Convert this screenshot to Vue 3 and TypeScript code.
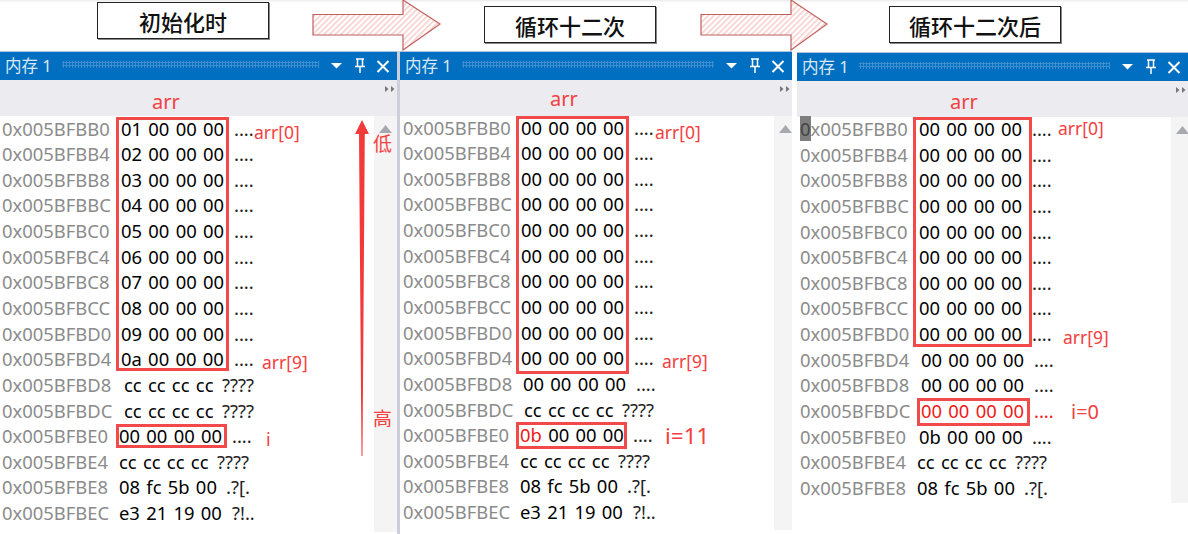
<script setup lang="ts">
interface Row { a: string; h: string; t: string; i: number; hot?: string; red?: boolean }
interface Note { text: string; x: number; y: number; size: number }
interface Box { x: number; y: number; w: number; h: number }
interface Panel { w: number; top: number; addrX: number; lift: number; rows: Row[]; notes: Note[]; boxes: Box[]; arrX: number; arrY: number; cursor?: boolean; scrollCut: number }

const addrs = ['BB0','BB4','BB8','BBC','BC0','BC4','BC8','BCC','BD0','BD4']
const mk = (vals: string[], x: number): Row[] => addrs.map((s, k) => ({ a: '0x005BF' + s, h: vals[k], t: '....', i: x }))
const first = ['01','02','03','04','05','06','07','08','09','0a'].map(v => v + ' 00 00 00')
const zero = Array(10).fill('00 00 00 00') as string[]

const panels: Panel[] = [
  {
    w: 400, top: 0, addrX: 2, lift: 0.5, arrX: 152, arrY: 90, scrollCut: 2,
    rows: [...mk(first, 121),
      { a: '0x005BFBD8', h: 'cc cc cc cc', t: '????', i: 124 },
      { a: '0x005BFBDC', h: 'cc cc cc cc', t: '????', i: 124 },
      { a: '0x005BFBE0', h: '00 00 00 00', t: '....', i: 119 },
      { a: '0x005BFBE4', h: 'cc cc cc cc', t: '????', i: 119 },
      { a: '0x005BFBE8', h: '08 fc 5b 00', t: '.?[.', i: 119 },
      { a: '0x005BFBEC', h: 'e3 21 19 00', t: '?!..', i: 119 }],
    notes: [
      { text: 'arr[0]', x: 254, y: 122, size: 17.5 },
      { text: 'arr[9]', x: 262, y: 352, size: 17.5 },
      { text: 'i', x: 266, y: 429, size: 18 },
      { text: '低', x: 373, y: 133, size: 19 },
      { text: '高', x: 373, y: 408, size: 19 }],
    boxes: [{ x: 116, y: 66, w: 113, h: 254 }, { x: 116, y: 373, w: 111, h: 24 }]
  },
  {
    w: 392, top: 0, addrX: 3, lift: 1.5, arrX: 150, arrY: 87, scrollCut: 4,
    rows: [...mk(zero, 121),
      { a: '0x005BFBD8', h: '00 00 00 00', t: '....', i: 123 },
      { a: '0x005BFBDC', h: 'cc cc cc cc', t: '????', i: 124 },
      { a: '0x005BFBE0', h: '00 00 00 00', t: '....', i: 120, hot: '0b' },
      { a: '0x005BFBE4', h: 'cc cc cc cc', t: '????', i: 120 },
      { a: '0x005BFBE8', h: '08 fc 5b 00', t: '.?[.', i: 120 },
      { a: '0x005BFBEC', h: 'e3 21 19 00', t: '?!..', i: 120 }],
    notes: [
      { text: 'arr[0]', x: 255, y: 122, size: 17.5 },
      { text: 'arr[9]', x: 262, y: 351, size: 17.5 },
      { text: 'i=11', x: 265, y: 422, size: 22.5 }],
    boxes: [{ x: 116, y: 65, w: 113, h: 258 }, { x: 116, y: 371, w: 111, h: 27 }]
  },
  {
    w: 391, top: 1, addrX: 3, lift: 1, arrX: 153, arrY: 90, scrollCut: 31, cursor: true,
    rows: [...mk(zero, 122).slice(0, 9),
      { a: '0x005BFBD4', h: '00 00 00 00', t: '....', i: 124 },
      { a: '0x005BFBD8', h: '00 00 00 00', t: '....', i: 124 },
      { a: '0x005BFBDC', h: '00 00 00 00', t: '....', i: 124, red: true },
      { a: '0x005BFBE0', h: '0b 00 00 00', t: '....', i: 122 },
      { a: '0x005BFBE4', h: 'cc cc cc cc', t: '????', i: 120 },
      { a: '0x005BFBE8', h: '08 fc 5b 00', t: '.?[.', i: 120 }],
    notes: [
      { text: 'arr[0]', x: 261, y: 118, size: 17.5 },
      { text: 'arr[9]', x: 266, y: 327, size: 17.5 },
      { text: 'i=0', x: 274, y: 400, size: 20 }],
    boxes: [{ x: 116, y: 65, w: 119, h: 230 }, { x: 120, y: 346, w: 113, h: 28 }]
  }
]

const textLeft = (r: Row): number => {
  if (r.h.startsWith('cc')) return r.i + 98
  if (r.t === '.?[.') return r.i + 107
  return r.i + 113
}
const isCursor = (p: Panel, r: Row): boolean => !!p.cursor && r.a.endsWith('BB0')
</script>

<template>
  <div class="page">
    <header class="banner">
      <div class="label first">初始化时</div>
      <svg class="arrow one" width="130" height="51" viewBox="0 0 130 51">
        <defs>
          <pattern id="hatch" width="4" height="4" patternUnits="userSpaceOnUse" patternTransform="rotate(45)">
            <rect width="4" height="4" fill="#fff" />
            <rect width="1.6" height="4" fill="#f6cfcc" />
          </pattern>
        </defs>
        <path d="M1 14.500H91V0L128 24L91 50V35H1Z" fill="url(#hatch)" stroke="#c0615f" stroke-width="1.2" />
      </svg>
      <div class="label second">循环十二次</div>
      <svg class="arrow two" width="130" height="51" viewBox="0 0 130 51">
        <path d="M1 14.500H91V0L127 24L91 50V35H1Z" fill="url(#hatch)" stroke="#c0615f" stroke-width="1.2" />
      </svg>
      <div class="label third">循环十二次后</div>
    </header>

    <main class="panels">
      <section
        v-for="(p, n) in panels"
        :key="n"
        class="panel"
        :style="{ width: p.w + 'px', marginTop: p.top + 'px', height: 483 - p.top + 'px' }"
      >
        <div class="titlebar">
          <span class="title">内存 1</span>
          <span class="grip"></span>
          <svg class="tool" width="60" height="18" viewBox="0 0 60 18">
            <path d="M0 7H11L5.500 12.500Z" fill="#fff" />
            <path d="M25 3H33M26.500 3V10.500M31.500 3V10.500M24 10.500H34M29 10.500V17" fill="none" stroke="#fff" stroke-width="1.5" />
            <path d="M46.500 5L57.500 16M57.500 5L46.500 16" fill="none" stroke="#fff" stroke-width="2" />
          </svg>
        </div>
        <div class="toolbar">
          <svg class="more" width="10" height="6" viewBox="0 0 10 6">
            <path d="M0 0L3.500 3L0 6ZM6 0L9.500 3L6 6Z" fill="#777" />
          </svg>
        </div>
        <div class="body">
          <div class="rows" :style="{ marginTop: -p.lift + 'px' }">
            <div v-for="r in p.rows" :key="r.a" class="row">
              <span class="addr" :style="{ left: p.addrX + 'px' }"><i v-if="isCursor(p, r)" class="caret">0</i>{{ isCursor(p, r) ? r.a.slice(1) : r.a }}</span>
              <span class="hex" :class="{ red: r.red }" :style="{ left: r.i + 'px' }"><em v-if="r.hot">{{ r.hot + '&nbsp;' }}</em>{{ r.hot ? r.h.slice(3) : r.h }}</span>
              <span class="text" :class="{ red: r.red }" :style="{ left: textLeft(r) + 'px' }">{{ r.t }}</span>
            </div>
          </div>
          <div class="scroll" :style="{ marginBottom: p.scrollCut + 'px' }">
            <svg width="13" height="8" viewBox="0 0 13 8"><path d="M0 8L6.500 0L13 8Z" fill="#a8a8b0" /></svg>
          </div>
        </div>
        <span class="arr" :style="{ left: p.arrX + 'px', top: p.arrY - 51 - p.top + 'px' }">arr</span>
        <span
          v-for="b in p.boxes"
          :key="b.y"
          class="box"
          :style="{ left: b.x + 'px', top: b.y + 'px', width: b.w + 'px', height: b.h + 'px' }"
        ></span>
        <span
          v-for="m in p.notes"
          :key="m.text"
          class="note"
          :style="{ left: m.x + 'px', top: m.y - 51 - p.top + 'px', fontSize: m.size + 'px' }"
        >{{ m.text }}</span>
        <svg v-if="n === 0" class="bigarrow" width="16" height="338" viewBox="0 0 16 338">
          <path d="M7 0L14 14H9.800L7.500 336H6.500L4 14H0Z" fill="#f33a3a" />
        </svg>
      </section>
    </main>
  </div>
</template>

<style>
html, body { margin: 0; background: #fff; overflow: hidden; }
</style>

<style scoped>
.page {
  width: 1188px;
  height: 534px;
  overflow: hidden;
  font-family: "Noto Sans", "Open Sans", "Noto Sans CJK SC", sans-serif;
}
.banner {
  height: 51px;
  display: flex;
  align-items: flex-start;
  box-sizing: border-box;
  position: relative;
  background: linear-gradient(#eee, #eee 1px, #fff 2px);
}
.label {
  flex: none;
  width: 172px;
  box-sizing: border-box;
  border: 1px solid #222;
  background: #fff;
  display: flex;
  align-items: center;
  justify-content: center;
  font-family: "Noto Sans CJK SC", sans-serif;
  font-weight: 500;
  font-size: 22px;
  color: #111;
  box-shadow: 1px 1px 0 #888;
}
.first { margin: 2px 0 0 97px; height: 37px; }
.second { margin: 6px 0 0 42px; height: 37px; }
.third { margin: 6px 0 0 59px; height: 37px; }
.arrow { flex: none; }
.one { margin-left: 43px; }
.two { margin-left: 44px; }
.panels {
  display: flex;
  align-items: flex-start;
}
.panel {
  position: relative;
  flex: none;
  background: #fff;
  box-sizing: border-box;
}
.panel:nth-child(1) { border-right: 3px solid #ccced9; }
.panel:nth-child(2) { margin-right: 5px; }
.titlebar {
  height: 29px;
  background: #006fc1;
  display: flex;
  align-items: center;
  padding: 0 6px 3px 5px;
  color: #dbe7f3;
  box-sizing: border-box;
  border-top: 1px solid #a9c4df;
}
.title { font-size: 16.5px; width: 57px; flex: none; white-space: nowrap; }
.grip {
  flex: 1;
  height: 7px;
  margin-right: 12px;
  background-image: radial-gradient(#3f8fcf 1px, transparent 1.1px);
  background-size: 3px 3px;
}
.tool { flex: none; overflow: visible; }
.toolbar {
  height: 36px;
  background: #ececf0;
  position: relative;
}
.more { position: absolute; right: 2px; top: 6px; }
.body {
  display: flex;
  height: calc(100% - 65px);
  background: #fff;
}
.rows { flex: none; width: 374px; }
.row {
  position: relative;
  height: 25.65px;
  line-height: 25.65px;
  font-size: 18.4px;
  white-space: nowrap;
}
.addr { position: absolute; color: #8b8b8b; }
.caret { font-style: normal; background: #7e7e7e; color: #444; }
.hex { position: absolute; color: #000; word-spacing: 1.5px; }
.hex em { font-style: normal; color: #f01818; }
.text { position: absolute; color: #222; }
.hex.red, .text.red { color: #f01818; }
.scroll {
  flex: 1;
  min-width: 0;
  overflow: hidden;
  background: #f4f4f5;
  display: flex;
  align-items: flex-start;
  padding: 9px 0 0 5px;
  box-sizing: border-box;
}
.scroll svg { flex: none; }
.arr { position: absolute; color: #f34040; font-size: 20px; line-height: 24px; }
.box { position: absolute; box-sizing: border-box; border: 3px solid #f24a4a; }
.note { position: absolute; color: #f34040; line-height: 1.2; white-space: nowrap; }
.bigarrow { position: absolute; left: 355px; top: 69px; }
</style>
